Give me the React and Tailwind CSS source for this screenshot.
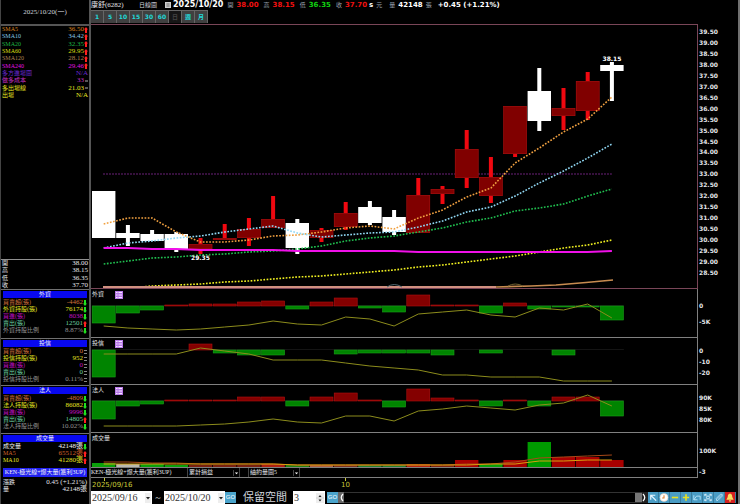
const SLOT = 24.2
const FIRST = 12.7
const COUNT = 22
const W = 606
const centre = i => FIRST + i * SLOT

const PERIODS = ['1', '5', '10', '15', '30', '60', '日', '週', '月']

// label, value, colour, trend
const INDICATORS = [
  ['SMA5', '36.50', 'text-[#d9801f]', 'up'],
  ['SMA10', '34.42', 'text-[#84c4e4]', 'up'],
  ['SMA20', '32.35', 'text-[#1fb344]', 'up'],
  ['SMA60', '29.95', 'text-[#dede10]', 'up'],
  ['SMA120', '28.12', 'text-[#b08050]', 'up'],
  ['SMA240', '29.46', 'text-[#e010e0]', 'up'],
  ['多方進場圖', 'N/A', 'text-[#6a28d0]', ''],
  ['做多成本', '33', 'text-[#c030c0]', 'flat'],
  ['多出場線', '21.03', 'text-[#e6e620]', 'flat'],
  ['出場', 'N/A', 'text-[#e6e620]', ''],
]

const QUOTE = [
  ['開', '38.00', 'text-gray-200', ''],
  ['高', '38.15', 'text-gray-200', ''],
  ['低', '36.35', 'text-gray-200', ''],
  ['收', '37.70', 'text-gray-200', ''],
]

const FOREIGN = [
  ['買賣超(張)', '-4462', 'text-[#d0703a]', 'down'],
  ['外資持股(張)', '76174', 'text-[#e6e620]', 'down'],
  ['買進(張)', '8038', 'text-[#c010c0]', 'down'],
  ['賣出(張)', '12501', 'text-[#6cd0a0]', 'up'],
  ['外資持股比例', '8.87%', 'text-[#949494]', 'down'],
]

const TRUST = [
  ['買賣超(張)', '0', 'text-[#d0703a]', 'same'],
  ['投信持股(張)', '952', 'text-[#e6e620]', 'same'],
  ['買進(張)', '0', 'text-[#c010c0]', 'same'],
  ['賣出(張)', '0', 'text-[#6cd0a0]', 'same'],
  ['投信持股比例', '0.11%', 'text-[#949494]', 'same'],
]

const INSTITUTION = [
  ['買賣超(張)', '-4809', 'text-[#d0703a]', 'down'],
  ['法人持股(張)', '86082', 'text-[#e6e620]', 'down'],
  ['買進(張)', '9996', 'text-[#c010c0]', 'down'],
  ['賣出(張)', '14805', 'text-[#6cd0a0]', 'up'],
  ['法人持股比例', '10.02%', 'text-[#949494]', 'down'],
]

const VOLUME = [
  ['成交量', '42148張', 'text-gray-100', 'down'],
  ['MA5', '65512張', 'text-[#d0602a]', 'up'],
  ['MA10', '41280張', 'text-[#e6e620]', 'up'],
]

const STRATEGY = [
  ['漲跌', '0.45 (+1.21%)', 'text-gray-200', ''],
  ['量', '42148張', 'text-gray-200', ''],
]

// body top, body bottom, high, low (plot units), rising
const CANDLES = [
  [166, 213, 166, 213, false],
  [208, 213, 200, 221, false],
  [209, 216, 205, 216, false],
  [209, 225, 207, 227, false],
  [219, 224, 213, 229, true],
  [213, 215, 199, 215, true],
  [204, 213, 193, 221, true],
  [194, 203, 171, 203, true],
  [198, 223, 194, 229, false],
  [205, 213, 203, 217, true],
  [188, 202, 177, 205, true],
  [182, 198, 176, 200, false],
  [192, 207, 185, 210, false],
  [170, 208, 153, 208, true],
  [164, 169, 161, 179, true],
  [124, 153, 105, 163, true],
  [152, 171, 132, 178, true],
  [81, 129, 81, 132, true],
  [66, 96, 43, 106, false],
  [83, 91, 63, 105, true],
  [56, 86, 47, 95, true],
  [40, 46, 37, 76, false],
]

const SMA5 = [199, 193, 193, 207, 217, 217, 215, 211, 210, 207, 203, 201, 204, 193, 185, 172, 163, 138, 123, 107, 94, 72]
const SMA10 = [223, 218, 216, 213, 211, 207, 204, 201, 208, 212, 210, 208, 207, 202, 196, 187, 182, 171, 158, 146, 133, 119]
const SMA20 = [239, 236, 233, 232, 230, 229, 227, 226, 224, 221, 216, 213, 211, 207, 203, 197, 193, 186, 183, 179, 171, 164]
const SMA60 = [264, 263, 261, 260, 259, 257, 256, 254, 252, 251, 249, 247, 245, 242, 240, 237, 234, 231, 227, 223, 220, 215]
const SMA240 = [223, 223, 224, 224, 225, 225, 225, 225, 226, 226, 226, 226, 226, 227, 227, 227, 227, 227, 227, 227, 227, 226]

const FOREIGN_BARS = [-17, -7, -4, 1, 2, 2, 4, 5, -3, 4, 8, -2, -6, 11, 1, 1, -7, 3, -3, -1, -1, -14]
const FOREIGN_LINE = [37, 39, 40, 41, 40, 38, 36, 32, 35, 36, 28, 30, 37, 25, 23, 21, 26, 28, 19, 21, 15, 29]
const TRUST_BARS = [-27, 0, 0, 0, 6, -3, -5, -5, 0, 0, -4, -3, -3, -3, -5, 0, -3, 0, 0, -5, 0, 0]
const TRUST_LINE = [16, 16, 16, 16, 10, 13, 16, 22, 22, 22, 25, 28, 30, 32, 37, 37, 39, 39, 39, 43, 43, 43]
const INST_BARS = [-18, -5, -3, 1, 1, 1, 4, 4, -5, 4, 8, 1, -6, 12, 3, 1, -5, 1, -5, 4, 4, -15]
const INST_LINE = [41, 41, 41, 41, 40, 39, 37, 34, 37, 38, 31, 31, 36, 26, 24, 21, 23, 25, 20, 18, 10, 21]
const VOL_BARS = [
  [4, '#0aa00a'], [3, '#b8b8b0'], [3, '#0aa00a'], [2, '#0aa00a'], [2, '#7a2010'], [2, '#7a2010'],
  [2, '#7a2010'], [3, '#b02010'], [2, '#208010'], [2, '#b06040'], [2, '#7a3020'], [2, '#208030'],
  [2, '#208030'], [3, '#b02010'], [2, '#7a2010'], [7, '#a80000'], [3, '#0aa00a'], [7, '#a80000'],
  [25, '#009a00'], [10, '#a80000'], [10, '#a80000'], [7, '#a80000'],
]
const VOL_MA5 = [29, 29, 30, 30, 31, 31, 31, 31, 32, 32, 32, 32, 32, 32, 32, 31, 31, 29, 25, 24, 23, 22]
const VOL_MA10 = [31, 31, 31, 31, 31, 31, 31, 31, 32, 32, 32, 32, 32, 32, 32, 32, 31, 31, 28, 28, 27, 27]

const PRICES = Array.from({ length: 23 }, (_, i) => (39.5 - i * 0.5).toFixed(2))

const points = ys => ys.map((y, i) => `${centre(i)},${y}`).join(' ')

function Trend({ kind }) {
  if (kind === 'up') return <svg viewBox="0 0 4 6" className="block h-1.5 w-1"><path d="M2 0 4 2.500H3V6H1V2.500H0Z" fill="#ff2020" /></svg>
  if (kind === 'down') return <svg viewBox="0 0 4 6" className="block h-1.5 w-1"><path d="M2 6 4 3.500H3V0H1V3.500H0Z" fill="#20e020" /></svg>
  if (kind === 'flat') return <svg viewBox="0 0 4 6" className="block h-1.5 w-1"><path d="M1 3H4" stroke="#ddd" strokeWidth=".8" /></svg>
  return <svg viewBox="0 0 4 6" className="block h-1.5 w-1"><path d="M1 1.500H4M1 4.500H4" stroke="#aaa" strokeWidth=".8" /></svg>
}

function Rows({ rows, label, className = '' }) {
  return (
    <table aria-label={label} className={`w-full border-collapse text-[6px] leading-[7px] ${className}`}>
      <tbody>
        {rows.map(([name, value, color, trend]) => (
          <tr key={name} className={color}>
            <th scope="row" className="whitespace-nowrap p-0 text-left font-normal">{name}</th>
            <td colSpan={trend ? 1 : 2} className="whitespace-nowrap p-0 text-right text-[7px]">{value}</td>
            {trend && <td className="w-1 p-0"><Trend kind={trend} /></td>}
          </tr>
        ))}
      </tbody>
    </table>
  )
}

function Section({ title, rows, height }) {
  return (
    <section className={`shrink-0 overflow-hidden border-t border-[#707070] px-0.5 pt-px ${height}`}>
      <h2 className="bg-[#0808f0] text-center text-[6px] leading-[7px] text-gray-100">{title}</h2>
      <Rows rows={rows} label={title} className="mt-px" />
    </section>
  )
}

function Sidebar() {
  return (
    <aside className="flex w-[91px] shrink-0 flex-col border-l border-r-2 border-l-[#444] border-r-[#555]">
      <div className="flex h-6 items-center justify-center text-[7px] text-gray-300">2025/10/20(一)</div>
      <div className="flex-1 border-t-2 border-[#555] px-px">
        <Rows rows={INDICATORS} label="指標" className="h-[73px]" />
      </div>
      <div className="border-t border-[#909090] px-px">
        <Rows rows={QUOTE} label="報價" className="h-[29px]" />
      </div>
      <Section title="外資" rows={FOREIGN} height="h-[49px]" />
      <Section title="投信" rows={TRUST} height="h-[47px]" />
      <Section title="法人" rows={INSTITUTION} height="h-12" />
      <Section title="成交量" rows={VOLUME} height="h-[35px]" />
      <section className="h-9 shrink-0 px-0.5">
        <h2 className="whitespace-nowrap bg-[#2020f0] text-center text-[6px] leading-[9px] text-gray-100">KEN-極光線+爆大量(獲利3UP)</h2>
        <Rows rows={STRATEGY} label="策略" className="mt-0.5" />
      </section>
    </aside>
  )
}

function Field({ name, value, color }) {
  return (
    <span className="flex items-center gap-[3px]">
      <span className="text-[6px] font-normal text-gray-400">{name}</span>
      <span className={color}>{value}</span>
    </span>
  )
}

function Header() {
  return (
    <header className="h-6 shrink-0">
      <div className="flex h-2.5 items-center whitespace-nowrap font-['DejaVu_Sans','Noto_Sans_CJK_TC',sans-serif] text-[7px] font-bold leading-[10px] text-white">
        <h1 className="w-12 font-['Liberation_Serif','Noto_Sans_CJK_TC',serif] font-normal text-gray-200">康舒(6282)</h1>
        <span className="w-[26px] text-[6px] font-normal text-gray-300">日線圖</span>
        <svg viewBox="0 0 6 6" className="mr-0.5 h-1.5 w-1.5"><path d="M0 0H6V6H0Z" fill="#ccc" /><path d="M1 2H5M1 4H5M3 1V5" stroke="#777" strokeWidth=".7" /></svg>
        <span className="mr-1 text-[8px]">2025/10/20</span>
        <div className="flex gap-[5px]">
          <Field name="開" value="38.00" color="text-[#f01010]" />
          <Field name="高" value="38.15" color="text-[#f01010]" />
          <Field name="低" value="36.35" color="text-[#10d010]" />
          <Field name="收" value="37.70" color="text-[#f01010]" />
        </div>
        <span className="ml-0.5">s</span>
        <span className="ml-[3px] mr-[7px] text-[6px] font-normal text-gray-400">元</span>
        <Field name="量" value="42148" color="text-white" />
        <span className="ml-[3px] mr-1.5 text-[6px] font-normal text-gray-400">張</span>
        <span>+0.45 (+1.21%)</span>
      </div>
      <nav className="flex" aria-label="週期">
        {PERIODS.map(p => (
          <button
            key={p}
            className={`h-[13px] w-[13px] border-r border-t border-[#666] font-['DejaVu_Sans','Noto_Sans_CJK_TC',sans-serif] text-[6px] font-bold leading-3 ${
              p === '日' ? 'bg-[#161616] text-[#444]' : 'bg-[#404040] text-[#22d8d8]'
            }`}
          >
            {p}
          </button>
        ))}
      </nav>
    </header>
  )
}

function Dotted({ ys, color }) {
  return <polyline points={points(ys)} fill="none" stroke={color} strokeWidth="1.6" strokeDasharray="1.7 1.5" />
}

function PriceChart() {
  return (
    <section className="flex min-h-0 flex-1">
      <div className="relative flex-1 border-b border-r border-t border-[#7a4658]">
        <svg viewBox={`0 0 ${W} 263`} preserveAspectRatio="none" className="absolute inset-0 h-full w-full">
          <path d={`M12 149H${centre(21)}`} stroke="#6a2078" strokeDasharray="2 1" />
          {CANDLES.map(([top, bottom, high, low, rising], i) => (
            <g key={i}>
              <rect x={centre(i) - 2} y={high} width="4" height={low - high} fill={rising ? '#f00810' : '#fff'} />
              <rect x={centre(i) - 11.7} y={top} width="23.4" height={bottom - top} fill={rising ? '#800000' : '#fff'} />
              {rising && <rect x={centre(i) - 11.5} y={top + 0.3} width="23" height={bottom - top - 0.6} fill="none" stroke="#a01010" strokeWidth=".6" />}
            </g>
          ))}
          <Dotted ys={SMA5} color="#f0a040" />
          <Dotted ys={SMA10} color="#90d8f4" />
          <Dotted ys={SMA20} color="#20c050" />
          <Dotted ys={SMA60} color="#f0f020" />
          <polyline points={points(SMA240)} fill="none" stroke="#f010e8" strokeWidth="2" />
          <path d="M12 262H405" stroke="#d09080" strokeWidth="2" />
          <path d="M405 262 440 261 465 260 495 257.500 522 255" fill="none" stroke="#c88c50" strokeWidth="1.700" />
          <path d="M296 262Q303 257 311 262" fill="none" stroke="#506870" />
          <path d="M417 261Q424 257 432 261" fill="none" stroke="#706030" />
        </svg>
        {/* low / high markers */}
        <span className="absolute left-[16.5%] top-[87%] font-['DejaVu_Sans',sans-serif] text-[6px] font-bold leading-[7px] text-white">29.35</span>
        <span className="absolute left-[84.400%] top-[11.500%] font-['DejaVu_Sans',sans-serif] text-[6px] font-bold leading-[7px] text-white">38.15</span>
      </div>
      <Axis>
        <div className="flex h-full flex-col justify-between pb-[13px] pt-1">
          {PRICES.map(p => <span key={p} className="leading-[7px]">{p}</span>)}
        </div>
      </Axis>
    </section>
  )
}

function Axis({ children }) {
  return (
    <div className="w-10 shrink-0 pl-px font-['DejaVu_Sans',sans-serif] text-[6px] font-bold leading-[7px] text-gray-200">
      {children}
    </div>
  )
}

function Panel({ title, height, icon, axis, axisClass = '', children, size }) {
  return (
    <section className={`flex shrink-0 ${height}`}>
      <div className="relative flex-1 border-b border-r border-[#808080]">
        <svg viewBox={`0 0 ${W} ${size}`} preserveAspectRatio="none" className="absolute inset-0 h-full w-full">
          {children}
        </svg>
        <div className="relative flex items-start">
          <h2 className="w-6 whitespace-nowrap pl-px text-[6px] leading-[10px] text-gray-200">{title}</h2>
          {icon && (
            <button aria-label={`${title}明細`} className="mt-0.5">
              <svg viewBox="0 0 8 8" className="block h-2 w-2">
                <path d="M0 0H8V8H0Z" fill="#b878e8" />
                <path d="M1 1.500H2.500M3.500 1.500H7M1 4H2.500M3.500 4H7M1 6.500H2.500M3.500 6.500H7" stroke="#f4e8ff" />
              </svg>
            </button>
          )}
        </div>
      </div>
      <Axis>
        <div className={`flex flex-col ${axisClass}`}>
          {axis.map(a => <span key={a}>{a}</span>)}
        </div>
      </Axis>
    </section>
  )
}

function FlowPlot({ bars, line, base }) {
  return (
    <>
      <path d={`M1 ${base - 0.5}H${centre(COUNT - 1) + 12}`} stroke="#222" strokeWidth=".6" />
      {bars.map((v, i) => v !== 0 && (
        <rect
          key={i}
          x={centre(i) - 11.5}
          y={v > 0 ? base - v : base}
          width="23"
          height={Math.abs(v)}
          fill={v > 0 ? '#840000' : '#008400'}
          stroke={v > 0 ? '#b01010' : '#18a018'}
          strokeWidth=".6"
        />
      ))}
      <polyline points={points(line)} fill="none" stroke="#8c8c1c" />
    </>
  )
}

function PlotSelect({ label, value, width }) {
  return (
    <div className={`relative flex h-[9px] items-center border-x border-[#444] ${width}`}>
      <select aria-label={label} defaultValue={value} className="h-full w-full appearance-none bg-black py-0 pl-px text-[6px] leading-[9px] text-gray-200">
        <option>{value}</option>
      </select>
      <svg viewBox="0 0 6 6" className="pointer-events-none absolute right-0 h-1.5 w-1.5 border-l border-[#444] bg-black"><path d="M1 2.500H5L3 4.500Z" fill="#fff" /></svg>
    </div>
  )
}

function DateSelect({ label, value }) {
  return (
    <div className="relative flex h-[13px] w-[61px] items-center bg-white">
      <select aria-label={label} defaultValue={value} className="h-full w-full appearance-none bg-white py-0 pl-px font-['Liberation_Serif',serif] text-[10px] leading-[13px] text-[#333]">
        <option>{value}</option>
      </select>
      <svg viewBox="0 0 6 10" className="pointer-events-none absolute right-px h-2.5 w-1.5 bg-[#eee]"><path d="M1 4H5L3 6.500Z" fill="#222" /></svg>
    </div>
  )
}

function GoButton() {
  return (
    <button className="flex h-[11px] w-[11px] items-center justify-center bg-[#4aa4cc] font-['Liberation_Sans',sans-serif] text-[6px] leading-[7px] text-white">GO</button>
  )
}

const TOOLS = [
  ['指標', 'bg-[#4a9cc4]', <path key="a" d="M3 8V3H8M3 3 9 9" fill="none" stroke="#e8f6ff" strokeWidth="1.300" />],
  ['時間', 'bg-[#4a9cc4]', <g key="b"><circle cx="5.500" cy="5.500" r="4.500" fill="#fff" /><path d="M5.500 3V6H3.500" fill="none" stroke="#e08030" strokeWidth="1.200" /><circle cx="5.500" cy="5.500" r="4.300" fill="none" stroke="#e8c8b0" strokeWidth=".6" /></g>],
  ['縮小', 'bg-[#4a9cc4]', <path key="c" d="M2 5.500H9" stroke="#e8e020" strokeWidth="1.800" />],
  ['放大', 'bg-[#4a9cc4]', <path key="d" d="M2 5.500H9M5.500 2V9" stroke="#e8e020" strokeWidth="1.800" />],
  ['復原', 'bg-[#4a9cc4]', <path key="e" d="M2 3V8H6M2 8 5 4H9V8" fill="none" stroke="#b8e4f8" strokeWidth="1" />],
  ['全螢幕', 'bg-[#4a9cc4]', <g key="f" fill="none" stroke="#e8f6ff"><path d="M2 4V2H4M7 2H9V4M9 7V9H7M4 9H2V7M2 2 4 4M9 2 7 4M9 9 7 7M2 9 4 7" strokeWidth=".9" /><circle cx="5.500" cy="5.500" r="1.700" strokeWidth=".9" /></g>],
  ['畫線', 'bg-[#4a9cc4]', <path key="g" d="M3 9 2.500 6.500 7 2 9 2 9 4 4.500 8.500ZM4 7 8 3" fill="none" stroke="#c8e8f8" strokeWidth=".9" />],
  ['警示', 'bg-[#d42020]', <path key="h" d="M5.500 1C3.500 1.500 3 3 3 5L1.500 8H9.500L8 5C8 3 7.500 1.500 5.500 1ZM4.500 8.500H6.500V9.800H4.500Z" fill="#f8e060" />],
]

function Toolbar() {
  return (
    <footer className="flex h-[13px] shrink-0 items-center whitespace-nowrap text-gray-300">
      <DateSelect label="開始日期" value="2025/09/16" />
      <span className="w-3 text-center text-[10px] leading-3">~</span>
      <DateSelect label="結束日期" value="2025/10/20" />
      <GoButton />
      <label className="ml-[7px] mr-0.5 flex items-center gap-1.5 text-[11px] leading-[13px]">
        保留空間
        <span className="relative flex h-[13px] w-8 items-center">
          <input type="number" defaultValue="3" className="h-full w-full appearance-none bg-white pl-px text-[10px] leading-3 text-[#333] [appearance:textfield]" />
          <svg viewBox="0 0 8 10" className="pointer-events-none absolute right-px h-2.5 w-2 bg-[#eee]"><path d="M2.500 4 4 2 5.500 4ZM2.500 6.500 4 8.500 5.500 6.500Z" fill="#222" /><path d="M0 5H8" stroke="#bbb" strokeWidth=".6" /></svg>
        </span>
      </label>
      <GoButton />
      {/* horizontal scroller */}
      <div className="flex h-[11px] flex-1 items-center">
        <button aria-label="向左" className="h-full w-1.5 bg-[#666]">
          <svg viewBox="0 0 6 11" className="block h-full w-full"><path d="M5 2Q1.500 5.500 5 9" fill="none" stroke="#fff" strokeWidth="1.200" /></svg>
        </button>
        <div className="flex h-full flex-1 justify-end border-y border-[#333] bg-black">
          <div className="h-full w-[7px] bg-[#777]" />
        </div>
        <button aria-label="向右" className="h-full w-1.5 bg-[#222]">
          <svg viewBox="0 0 6 11" className="block h-full w-full"><path d="M1 2Q4.500 5.500 1 9" fill="none" stroke="#fff" strokeWidth="1.200" /></svg>
        </button>
      </div>
      <div className="flex pr-0.5">
        {TOOLS.map(([name, bg, glyph]) => (
          <button key={name} aria-label={name} className={`h-[11px] w-[11px] border-r border-[#3a7c9c] ${bg}`}>
            <svg viewBox="0 0 11 11" className="block h-full w-full">{glyph}</svg>
          </button>
        ))}
      </div>
    </footer>
  )
}

export default function App() {
  return (
    <div className="flex h-screen overflow-hidden bg-black font-['Liberation_Serif','Noto_Sans_CJK_TC',serif]">
      <Sidebar />
      <main className="flex min-w-0 flex-1 flex-col border-r-2 border-[#707070]">
        <Header />
        <PriceChart />
        <Panel title="外資" height="h-[49px]" size={48} icon axis={['0', '-5K']} axisClass="gap-[9px] pt-[13px]">
          <FlowPlot bars={FOREIGN_BARS} line={FOREIGN_LINE} base={17} />
        </Panel>
        <Panel title="投信" height="h-[47px]" size={46} icon axis={['0', '-10', '-20']} axisClass="gap-1 pt-[9px]">
          <FlowPlot bars={TRUST_BARS} line={TRUST_LINE} base={12} />
        </Panel>
        <Panel title="法人" height="h-12" size={47} icon axis={['90K', '85K', '80K']} axisClass="gap-1 pt-[9px]">
          <FlowPlot bars={INST_BARS} line={INST_LINE} base={16} />
        </Panel>
        <Panel title="成交量" height="h-[35px]" size={34} axis={['100K']} axisClass="pt-[14px]">
          {VOL_BARS.map(([h, fill], i) => (
            <rect key={i} x={centre(i) - 11.7} y={34 - h} width="23.400" height={h} fill={fill} />
          ))}
          <polyline points={points(VOL_MA5)} fill="none" stroke="#a84818" />
          <polyline points={points(VOL_MA10)} fill="none" stroke="#d8a010" />
        </Panel>
        <section className="flex h-2.5 shrink-0">
          <div className="flex flex-1 items-center border-b border-r border-[#808080]">
            <h2 className="w-24 whitespace-nowrap text-[6px] leading-[9px] text-gray-200">KEN-極光線+爆大量(獲利3UP)</h2>
            <PlotSelect label="損益" value="累計損益" width="w-[53px]" />
            <div className="w-2" />
            <PlotSelect label="量圖" value="紬約量圖5" width="w-[52px]" />
          </div>
          <Axis>-3</Axis>
        </section>
        <div className="flex h-[13px] shrink-0 font-['DejaVu_Sans',sans-serif] text-[7px] leading-[9px] text-[#c8c838]">
          <div className="flex w-[250px] flex-col items-start pl-px">
            <span className="ml-3 h-[3px] w-px bg-[#c8c838]" />
            <span>2025/09/16</span>
          </div>
          <div className="flex flex-col items-center">
            <span className="h-[3px] w-px bg-[#c8c838]" />
            <span>10</span>
          </div>
        </div>
        <Toolbar />
      </main>
    </div>
  )
}
